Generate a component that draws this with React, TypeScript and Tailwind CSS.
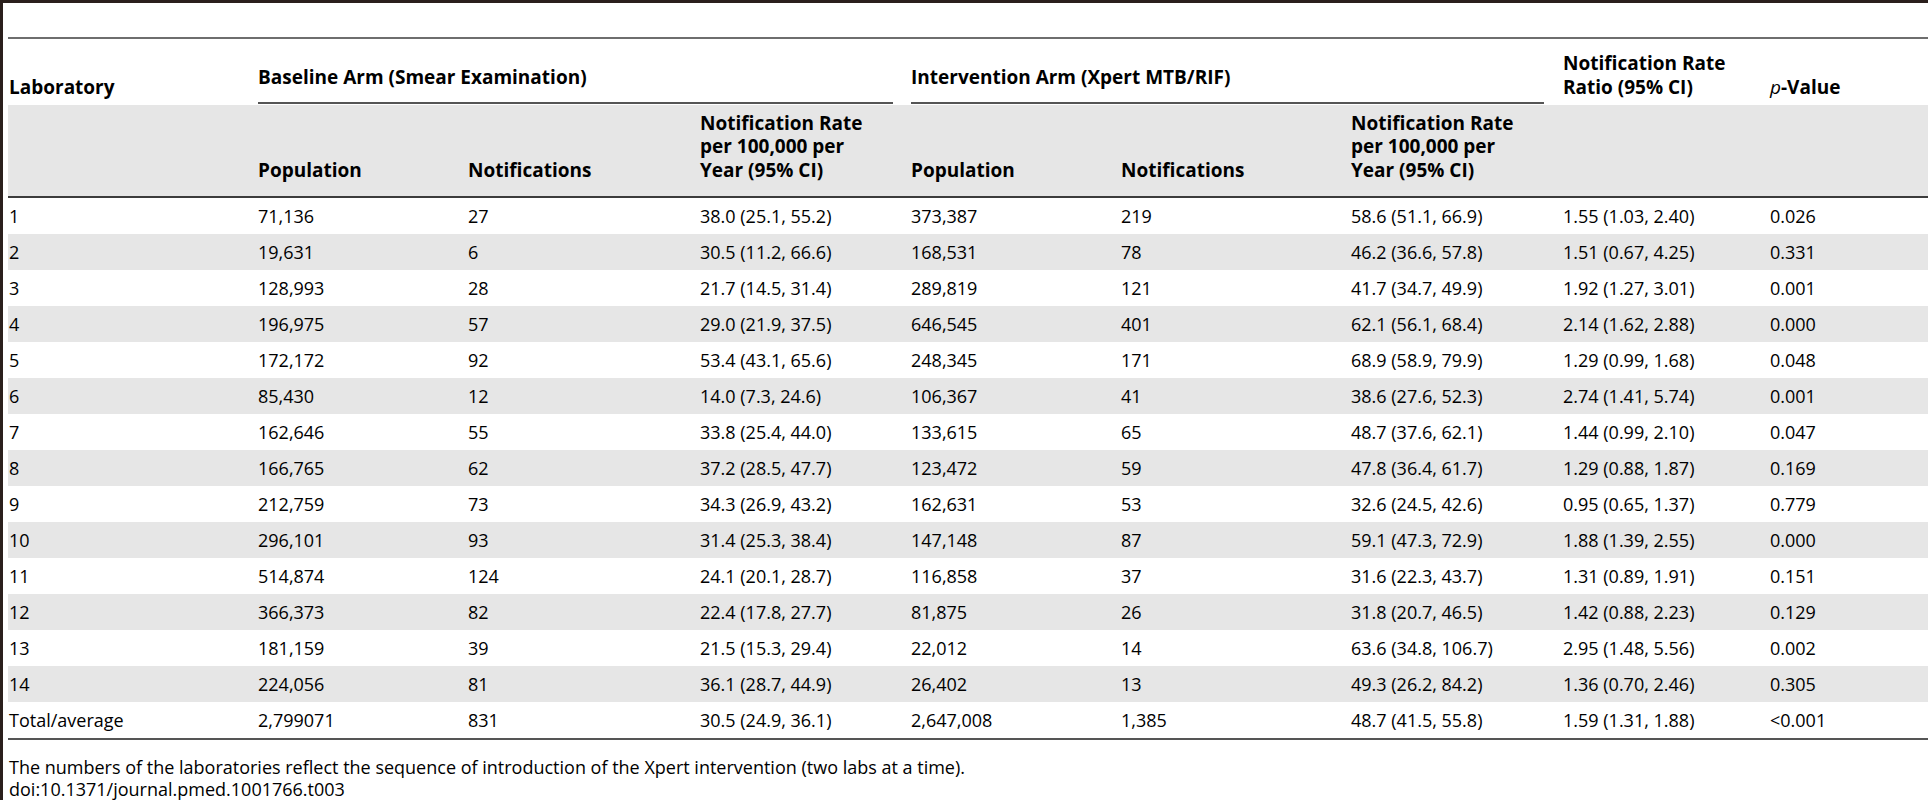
import React from "react";

const cols = "grid grid-cols-[250px_210px_232px_211px_210px_230px_212px_207px_1fr]";

const rows: string[][] = [
  ["1", "71,136", "27", "38.0 (25.1, 55.2)", "373,387", "219", "58.6 (51.1, 66.9)", "1.55 (1.03, 2.40)", "0.026"],
  ["2", "19,631", "6", "30.5 (11.2, 66.6)", "168,531", "78", "46.2 (36.6, 57.8)", "1.51 (0.67, 4.25)", "0.331"],
  ["3", "128,993", "28", "21.7 (14.5, 31.4)", "289,819", "121", "41.7 (34.7, 49.9)", "1.92 (1.27, 3.01)", "0.001"],
  ["4", "196,975", "57", "29.0 (21.9, 37.5)", "646,545", "401", "62.1 (56.1, 68.4)", "2.14 (1.62, 2.88)", "0.000"],
  ["5", "172,172", "92", "53.4 (43.1, 65.6)", "248,345", "171", "68.9 (58.9, 79.9)", "1.29 (0.99, 1.68)", "0.048"],
  ["6", "85,430", "12", "14.0 (7.3, 24.6)", "106,367", "41", "38.6 (27.6, 52.3)", "2.74 (1.41, 5.74)", "0.001"],
  ["7", "162,646", "55", "33.8 (25.4, 44.0)", "133,615", "65", "48.7 (37.6, 62.1)", "1.44 (0.99, 2.10)", "0.047"],
  ["8", "166,765", "62", "37.2 (28.5, 47.7)", "123,472", "59", "47.8 (36.4, 61.7)", "1.29 (0.88, 1.87)", "0.169"],
  ["9", "212,759", "73", "34.3 (26.9, 43.2)", "162,631", "53", "32.6 (24.5, 42.6)", "0.95 (0.65, 1.37)", "0.779"],
  ["10", "296,101", "93", "31.4 (25.3, 38.4)", "147,148", "87", "59.1 (47.3, 72.9)", "1.88 (1.39, 2.55)", "0.000"],
  ["11", "514,874", "124", "24.1 (20.1, 28.7)", "116,858", "37", "31.6 (22.3, 43.7)", "1.31 (0.89, 1.91)", "0.151"],
  ["12", "366,373", "82", "22.4 (17.8, 27.7)", "81,875", "26", "31.8 (20.7, 46.5)", "1.42 (0.88, 2.23)", "0.129"],
  ["13", "181,159", "39", "21.5 (15.3, 29.4)", "22,012", "14", "63.6 (34.8, 106.7)", "2.95 (1.48, 5.56)", "0.002"],
  ["14", "224,056", "81", "36.1 (28.7, 44.9)", "26,402", "13", "49.3 (26.2, 84.2)", "1.36 (0.70, 2.46)", "0.305"],
  ["Total/average", "2,799071", "831", "30.5 (24.9, 36.1)", "2,647,008", "1,385", "48.7 (41.5, 55.8)", "1.59 (1.31, 1.88)", "<0.001"],
];

function RateHeader() {
  return (
    <div>
      Notification Rate
      <br />
      per 100,000 per
      <br />
      Year (95% CI)
    </div>
  );
}

export default function App() {
  return (
    <div className="h-[800px] overflow-hidden bg-white border-t-[3px] border-l-[3px] border-[#2a1f1c] pl-[5px] pt-[34px] text-black font-['Open_Sans',sans-serif]">
      {/* top rule */}
      <div className="h-[2px] bg-[#6e6e6e]" />

      {/* header row 1 */}
      <div className={`${cols} h-[66px] items-end text-[19px] font-bold leading-[24px]`}>
        <div className="pl-[1px] pb-[6px]">Laboratory</div>
        <div className="col-span-3 mr-[18px] mb-[1px] pb-[13px] border-b-2 border-[#555]">
          Baseline Arm (Smear Examination)
        </div>
        <div className="col-span-3 mr-[19px] mb-[1px] pb-[13px] border-b-2 border-[#555]">
          Intervention Arm (Xpert MTB/RIF)
        </div>
        <div className="pb-[6px]">
          Notification Rate
          <br />
          Ratio (95% CI)
        </div>
        <div className="pb-[6px]">
          <span className="italic font-normal">p</span>-Value
        </div>
      </div>

      {/* header row 2 */}
      <div className={`${cols} h-[91px] items-end bg-[#e6e6e6] text-[19px] font-bold leading-[23.5px] pb-[14px]`}>
        <div />
        <div>Population</div>
        <div>Notifications</div>
        <RateHeader />
        <div>Population</div>
        <div>Notifications</div>
        <RateHeader />
        <div />
        <div />
      </div>

      <div className="h-[2px] bg-[#3c3c3c]" />

      {/* body */}
      {rows.map((r, i) => (
        <div
          key={i}
          className={`${cols} h-[36px] items-center text-[18px] ${i % 2 === 1 ? "bg-[#e6e6e6]" : "bg-white"}`}
        >
          {r.map((c, j) => (
            <div key={j} className={j === 0 ? "pl-[1px]" : ""}>
              {c}
            </div>
          ))}
        </div>
      ))}

      <div className="h-[2px] bg-[#555]" />

      {/* footnotes */}
      <div className="pl-[1px] pt-[16px] text-[18px] leading-[22px]">
        <p>The numbers of the laboratories reflect the sequence of introduction of the Xpert intervention (two labs at a time).</p>
        <p>doi:10.1371/journal.pmed.1001766.t003</p>
      </div>
    </div>
  );
}
